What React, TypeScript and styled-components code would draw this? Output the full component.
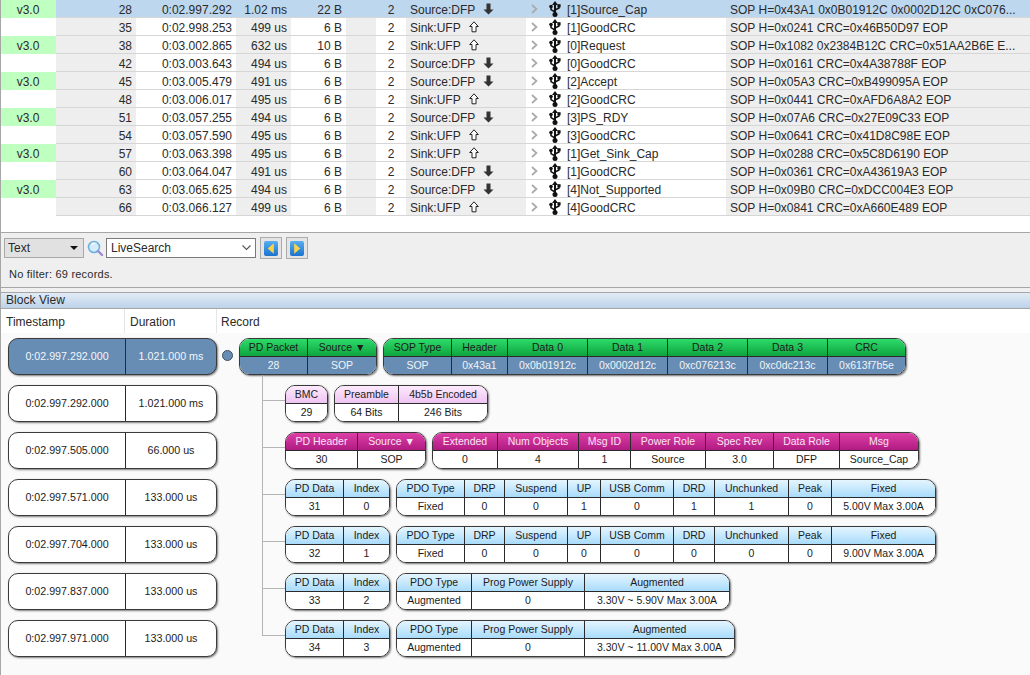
import React from "react";
import styled, { createGlobalStyle } from "styled-components";

const Global = createGlobalStyle`
  html, body { margin: 0; padding: 0; background: #fff; overflow: hidden; }
  * { box-sizing: border-box; }
`;

const Page = styled.div`
  width: 1030px;
  height: 675px;
  overflow: hidden;
  display: flex;
  flex-direction: column;
  border-left: 1px solid #a6a6a6;
  font-family: "Liberation Sans", Arial, sans-serif;
  color: #2a2a2a;
`;

const Table = styled.div`
  height: 233px;
  flex: none;
  border-bottom: 1px solid #a6a6a6;
  background: #fff;
`;

const Row = styled.div<{ $selected?: boolean }>`
  display: grid;
  grid-template-columns: 55px 80px 100px 55px 55px 30px 30px 120px 200px 1fr;
  height: 18px;
  font-size: 12px;
  line-height: 20px;
  background: ${(p) => (p.$selected ? "#bdd7ef" : "transparent")};
`;

const VersionCell = styled.div<{ $on: boolean }>`
  background: ${(p) => (p.$on ? "#bfffbf" : "transparent")};
  text-align: center;
  padding-right: 1px;
  overflow: hidden;
`;

const Cell = styled.div<{ $gray?: boolean; $sel?: boolean; $align?: string }>`
  background: ${(p) => (p.$sel ? "transparent" : p.$gray ? "#eeeeee" : "#ffffff")};
  border-bottom: 1px solid #d6d6d6;
  text-align: ${(p) => p.$align || "right"};
  padding: 0 4px;
  white-space: nowrap;
  overflow: hidden;
`;

const DirCell = styled(Cell)`
  display: flex;
  align-items: center;
  gap: 8px;
`;

const MsgCell = styled(Cell)`
  display: flex;
  align-items: center;
  padding: 0 0 0 5px;
`;

const Label = styled.span`
  margin-top: 3px;
`;

const Chevron = styled.svg`
  width: 7px;
  height: 10px;
  margin-right: 11px;
  flex: none;
`;

const UsbIcon = styled.svg`
  width: 12px;
  height: 16px;
  margin-right: 6px;
  flex: none;
`;

const DirIcon = styled.svg`
  width: 11px;
  height: 12px;
  flex: none;
`;

const Toolbar = styled.div`
  height: 55px;
  flex: none;
  background: #efefef;
  border-bottom: 1px solid #a6a6a6;
  padding: 4px 0 0 3px;
`;

const ToolRow = styled.div`
  display: flex;
  align-items: center;
  height: 22px;
`;

const SelectBox = styled.div`
  width: 80px;
  height: 20px;
  background: #e1e1e1;
  border: 1px solid #a8a8a8;
  font-size: 12px;
  line-height: 18px;
  padding-left: 3px;
  display: flex;
  justify-content: space-between;
  align-items: center;
`;

const Caret = styled.span`
  width: 0;
  height: 0;
  border-left: 4px solid transparent;
  border-right: 4px solid transparent;
  border-top: 4px solid #111;
  margin-right: 5px;
`;

const SearchIcon = styled.svg`
  width: 17px;
  height: 17px;
  margin: 0 2px 0 3px;
  flex: none;
`;

const Combo = styled.div`
  width: 150px;
  height: 20px;
  background: #fff;
  border: 1px solid #7a7a7a;
  font-size: 12px;
  line-height: 18px;
  padding-left: 4px;
  display: flex;
  justify-content: space-between;
  align-items: center;
`;

const ComboChevron = styled.svg`
  width: 9px;
  height: 6px;
  margin-right: 4px;
`;

const NavButton = styled.div`
  width: 22px;
  height: 22px;
  margin-left: 4px;
  background: #e4e4e4;
  border: 1px solid #ababab;
  display: flex;
  align-items: center;
  justify-content: center;
`;

const NavIcon = styled.svg`
  width: 14px;
  height: 15px;
`;

const Status = styled.div`
  font-size: 11px;
  line-height: 14px;
  margin: 8px 0 0 5px;
  letter-spacing: 0.22px;
`;

const Gap = styled.div`
  height: 4px;
  flex: none;
  background: #f0f0f0;
`;

const BlockTitle = styled.div`
  height: 17px;
  flex: none;
  border-top: 1px solid #a6a6a6;
  border-bottom: 1px solid #a6a6a6;
  background: linear-gradient(#e2ebf6, #bdd2e9);
  font-size: 12px;
  line-height: 15px;
  padding-left: 5px;
  letter-spacing: 0.05px;
`;

const ColumnHeads = styled.div`
  height: 24px;
  flex: none;
  display: grid;
  grid-template-columns: 124px 92px 1fr;
  background: #fff;
  font-size: 12px;
  line-height: 26px;
`;

const ColumnHead = styled.div`
  border-right: 1px solid #e6e6e6;
  padding-left: 5px;
  &:last-child {
    border-right: 0;
    padding-left: 4px;
  }
`;

const Body = styled.div`
  flex: 1;
  background: #fafafa;
  padding: 5px 0 0 7px;
  display: flex;
  flex-direction: column;
  gap: 10px;
`;

const BlockRow = styled.div`
  display: flex;
  height: 37px;
  font-size: 10.5px;
`;

const TimeCapsule = styled.div<{ $active?: boolean }>`
  width: 209px;
  flex: none;
  display: grid;
  grid-template-columns: 116px 1fr;
  border: 1px solid #3a3a3a;
  border-radius: 10px;
  overflow: hidden;
  box-shadow: 1px 1px 2px rgba(0, 0, 0, 0.5);
  background: ${(p) => (p.$active ? "#688db4" : "#ffffff")};
  color: ${(p) => (p.$active ? "#f2f6fa" : "#1c1c1c")};
  line-height: 35px;
  text-align: center;
  font-size: 10.7px;
`;

const TimeValue = styled.div`
  & + & {
    border-left: 1px solid #2a2a2a;
  }
`;

const Dot = styled.div`
  width: 11px;
  height: 11px;
  border-radius: 50%;
  background: #688db4;
  border: 1px solid #3f4f60;
  margin: 12px 6px 0 5px;
  flex: none;
`;

const Connector = styled.div<{ $last?: boolean }>`
  position: relative;
  width: 23px;
  margin-left: 45px;
  flex: none;
  &::before {
    content: "";
    position: absolute;
    left: 0;
    top: -10px;
    width: 1px;
    height: ${(p) => (p.$last ? "25px" : "47px")};
    background: #b4b4b4;
  }
  &::after {
    content: "";
    position: absolute;
    left: 0;
    top: 15px;
    height: 1px;
    width: 23px;
    background: #b4b4b4;
  }
`;

const Groups = styled.div`
  display: flex;
  gap: 6px;
`;

const Group = styled.div`
  display: flex;
  height: 37px;
  border: 1px solid #3a3a3a;
  border-radius: 10px;
  overflow: hidden;
  box-shadow: 1px 1px 2px rgba(0, 0, 0, 0.55);
`;

type Tone = "green" | "pink" | "magenta" | "blue";

const headBg: Record<Tone, string> = {
  green: "linear-gradient(#2ddb6a, #0fa440)",
  pink: "linear-gradient(#fdeafd, #efc4f3)",
  magenta: "linear-gradient(#dd3fa6, #b01b82)",
  blue: "linear-gradient(#e4f5ff, #a9dcfb)",
};

const GroupCell = styled.div<{ $w: number }>`
  width: ${(p) => p.$w}px;
  flex: none;
  display: flex;
  flex-direction: column;
  text-align: center;
  white-space: nowrap;
  & + & {
    border-left: 1px solid #2a2a2a;
  }
`;

const Head = styled.div<{ $tone: Tone }>`
  height: 18px;
  line-height: 17px;
  border-bottom: 1px solid #2a2a2a;
  background: ${(p) => headBg[p.$tone]};
  color: ${(p) => (p.$tone === "magenta" ? "#fbe3f3" : "#1c1c1c")};
`;

const Value = styled.div<{ $active?: boolean }>`
  height: 17px;
  line-height: 17px;
  background: ${(p) => (p.$active ? "#688db4" : "#ffffff")};
  color: ${(p) => (p.$active ? "#f0f4f8" : "#1c1c1c")};
`;

type Col = [string, string, number];

const Packet = ({ tone, cols, active }: { tone: Tone; cols: Col[]; active?: boolean }) => (
  <Group>
    {cols.map(([h, v, w], i) => (
      <GroupCell key={i} $w={w}>
        <Head $tone={tone}>{h}</Head>
        <Value $active={active}>{v}</Value>
      </GroupCell>
    ))}
  </Group>
);

const Usb = () => (
  <UsbIcon viewBox="0 0 12 16">
    <path d="M6 0 L9 4 H3 Z" fill="#111" />
    <path d="M6 3 V13" stroke="#111" strokeWidth="2" fill="none" />
    <circle cx="6" cy="13.4" r="2.5" fill="#111" />
    <path d="M6 11 L2 8.6 V6.5" stroke="#111" strokeWidth="1.5" fill="none" />
    <circle cx="2" cy="5.6" r="1.8" fill="#111" />
    <path d="M6 9 L10 7 V5" stroke="#111" strokeWidth="1.5" fill="none" />
    <rect x="8.4" y="3.2" width="3.2" height="3.2" fill="#111" />
  </UsbIcon>
);

const DirArrow = ({ down }: { down: boolean }) => (
  <DirIcon viewBox="0 0 11 12">
    {down ? (
      <path d="M3.5 0.5 H7.5 V6.5 H10.5 L5.5 11.5 L0.5 6.5 H3.5 Z" fill="#333" />
    ) : (
      <path d="M5 0.8 L9.3 5.5 H7 V10.8 H3 V5.5 H0.7 Z" fill="#fff" stroke="#222" strokeWidth="1" />
    )}
  </DirIcon>
);

type Rec = [number, string, string, string, boolean, string, string];
const records: Rec[] = [
  [28, "0:02.997.292", "1.02 ms", "22 B", true, "[1]Source_Cap", "SOP H=0x43A1 0x0B01912C 0x0002D12C 0xC076..."],
  [35, "0:02.998.253", "499 us", "6 B", false, "[1]GoodCRC", "SOP H=0x0241 CRC=0x46B50D97 EOP"],
  [38, "0:03.002.865", "632 us", "10 B", false, "[0]Request", "SOP H=0x1082 0x2384B12C CRC=0x51AA2B6E E..."],
  [42, "0:03.003.643", "494 us", "6 B", true, "[0]GoodCRC", "SOP H=0x0161 CRC=0x4A38788F EOP"],
  [45, "0:03.005.479", "491 us", "6 B", true, "[2]Accept", "SOP H=0x05A3 CRC=0xB499095A EOP"],
  [48, "0:03.006.017", "495 us", "6 B", false, "[2]GoodCRC", "SOP H=0x0441 CRC=0xAFD6A8A2 EOP"],
  [51, "0:03.057.255", "494 us", "6 B", true, "[3]PS_RDY", "SOP H=0x07A6 CRC=0x27E09C33 EOP"],
  [54, "0:03.057.590", "495 us", "6 B", false, "[3]GoodCRC", "SOP H=0x0641 CRC=0x41D8C98E EOP"],
  [57, "0:03.063.398", "495 us", "6 B", false, "[1]Get_Sink_Cap", "SOP H=0x0288 CRC=0x5C8D6190 EOP"],
  [60, "0:03.064.047", "491 us", "6 B", true, "[1]GoodCRC", "SOP H=0x0361 CRC=0xA43619A3 EOP"],
  [63, "0:03.065.625", "494 us", "6 B", true, "[4]Not_Supported", "SOP H=0x09B0 CRC=0xDCC004E3 EOP"],
  [66, "0:03.066.127", "499 us", "6 B", false, "[4]GoodCRC", "SOP H=0x0841 CRC=0xA660E489 EOP"],
];

const pdoCols = (v: string[]): Col[] => [
  ["PDO Type", "Fixed", 67],
  ["DRP", "0", 40],
  ["Suspend", "0", 63],
  ["UP", v[0], 33],
  ["USB Comm", "0", 73],
  ["DRD", v[1], 41],
  ["Unchunked", v[2], 74],
  ["Peak", "0", 43],
  ["Fixed", v[3], 104],
];

const augCols = (v: string, w: number): Col[] => [
  ["PDO Type", "Augmented", 74],
  ["Prog Power Supply", "0", 113],
  ["Augmented", v, w],
];

const pdData = (n: string, i: string): Col[] => [
  ["PD Data", n, 57],
  ["Index", i, 46],
];

const branches: { time: [string, string]; groups: { tone: Tone; cols: Col[] }[] }[] = [
  {
    time: ["0:02.997.292.000", "1.021.000 ms"],
    groups: [
      { tone: "pink", cols: [["BMC", "29", 41]] },
      { tone: "pink", cols: [["Preamble", "64 Bits", 63], ["4b5b Encoded", "246 Bits", 89]] },
    ],
  },
  {
    time: ["0:02.997.505.000", "66.000 us"],
    groups: [
      { tone: "magenta", cols: [["PD Header", "30", 71], ["Source ▼", "SOP", 68]] },
      {
        tone: "magenta",
        cols: [
          ["Extended", "0", 64],
          ["Num Objects", "4", 81],
          ["Msg ID", "1", 52],
          ["Power Role", "Source", 75],
          ["Spec Rev", "3.0", 68],
          ["Data Role", "DFP", 66],
          ["Msg", "Source_Cap", 79],
        ],
      },
    ],
  },
  {
    time: ["0:02.997.571.000", "133.000 us"],
    groups: [
      { tone: "blue", cols: pdData("31", "0") },
      { tone: "blue", cols: pdoCols(["1", "1", "1", "5.00V Max 3.00A"]) },
    ],
  },
  {
    time: ["0:02.997.704.000", "133.000 us"],
    groups: [
      { tone: "blue", cols: pdData("32", "1") },
      { tone: "blue", cols: pdoCols(["0", "0", "0", "9.00V Max 3.00A"]) },
    ],
  },
  {
    time: ["0:02.997.837.000", "133.000 us"],
    groups: [
      { tone: "blue", cols: pdData("33", "2") },
      { tone: "blue", cols: augCols("3.30V ~ 5.90V Max 3.00A", 145) },
    ],
  },
  {
    time: ["0:02.997.971.000", "133.000 us"],
    groups: [
      { tone: "blue", cols: pdData("34", "3") },
      { tone: "blue", cols: augCols("3.30V ~ 11.00V Max 3.00A", 150) },
    ],
  },
];

export default function App() {
  return (
    <Page>
      <Global />
      <Table>
        {records.map((r, i) => {
          const sel = i === 0;
          return (
            <Row key={r[0]} $selected={sel}>
              <VersionCell $on={i % 2 === 0}>{i % 2 === 0 ? "v3.0" : ""}</VersionCell>
              <Cell $gray $sel={sel}>{r[0]}</Cell>
              <Cell $sel={sel}>{r[1]}</Cell>
              <Cell $gray $sel={sel}>{r[2]}</Cell>
              <Cell $sel={sel}>{r[3]}</Cell>
              <Cell $gray $sel={sel} />
              <Cell $sel={sel} $align="center">2</Cell>
              <DirCell $gray $sel={sel} $align="left">
                <Label>{r[4] ? "Source:DFP" : "Sink:UFP"}</Label>
                <DirArrow down={r[4]} />
              </DirCell>
              <MsgCell $sel={sel} $align="left">
                <Chevron viewBox="0 0 7 10">
                  <path d="M1 1 L5.5 5 L1 9" stroke="#aaa" strokeWidth="1.7" fill="none" />
                </Chevron>
                <Usb />
                <Label>{r[5]}</Label>
              </MsgCell>
              <Cell $gray $sel={sel} $align="left">{r[6]}</Cell>
            </Row>
          );
        })}
      </Table>
      <Toolbar>
        <ToolRow>
          <SelectBox>
            Text
            <Caret />
          </SelectBox>
          <SearchIcon viewBox="0 0 17 17">
            <circle cx="7" cy="7" r="5.5" fill="#d4ecfb" stroke="#6fb2e2" strokeWidth="1.6" />
            <path d="M5 4.5 A3 3 0 0 1 8 3.5" stroke="#fff" strokeWidth="1.2" fill="none" />
            <path d="M11 11 L15 15" stroke="#9a8ccf" strokeWidth="2.4" strokeLinecap="round" />
          </SearchIcon>
          <Combo>
            LiveSearch
            <ComboChevron viewBox="0 0 9 6">
              <path d="M0.5 0.5 L4.5 4.5 L8.5 0.5" stroke="#555" strokeWidth="1.1" fill="none" />
            </ComboChevron>
          </Combo>
          <NavButton>
            <NavIcon viewBox="0 0 15 16">
              <defs>
                <linearGradient id="nb" x1="0" y1="0" x2="0" y2="1">
                  <stop offset="0" stopColor="#58aef0" />
                  <stop offset="1" stopColor="#1b73cf" />
                </linearGradient>
              </defs>
              <rect x="0" y="0" width="15" height="16" rx="2" fill="url(#nb)" />
              <path d="M10.5 2.5 V13.5 L4 8 Z" fill="#fbd24a" />
            </NavIcon>
          </NavButton>
          <NavButton>
            <NavIcon viewBox="0 0 15 16">
              <rect x="0" y="0" width="15" height="16" rx="2" fill="url(#nb)" />
              <path d="M4.5 2.5 V13.5 L11 8 Z" fill="#fbd24a" />
            </NavIcon>
          </NavButton>
        </ToolRow>
        <Status>No filter: 69 records.</Status>
      </Toolbar>
      <Gap />
      <BlockTitle>Block View</BlockTitle>
      <ColumnHeads>
        <ColumnHead>Timestamp</ColumnHead>
        <ColumnHead>Duration</ColumnHead>
        <ColumnHead>Record</ColumnHead>
      </ColumnHeads>
      <Body>
        <BlockRow>
          <TimeCapsule $active>
            <TimeValue>0:02.997.292.000</TimeValue>
            <TimeValue>1.021.000 ms</TimeValue>
          </TimeCapsule>
          <Dot />
          <Groups>
            <Packet tone="green" active cols={[["PD Packet", "28", 67], ["Source ▼", "SOP", 69]]} />
            <Packet
              tone="green"
              active
              cols={[
                ["SOP Type", "SOP", 67],
                ["Header", "0x43a1", 56],
                ["Data 0", "0x0b01912c", 80],
                ["Data 1", "0x0002d12c", 80],
                ["Data 2", "0xc076213c", 80],
                ["Data 3", "0xc0dc213c", 80],
                ["CRC", "0x613f7b5e", 78],
              ]}
            />
          </Groups>
        </BlockRow>
        {branches.map((b, i) => (
          <BlockRow key={i}>
            <TimeCapsule>
              <TimeValue>{b.time[0]}</TimeValue>
              <TimeValue>{b.time[1]}</TimeValue>
            </TimeCapsule>
            <Connector $last={i === branches.length - 1} />
            <Groups>
              {b.groups.map((g, j) => (
                <Packet key={j} tone={g.tone} cols={g.cols} />
              ))}
            </Groups>
          </BlockRow>
        ))}
      </Body>
    </Page>
  );
}
